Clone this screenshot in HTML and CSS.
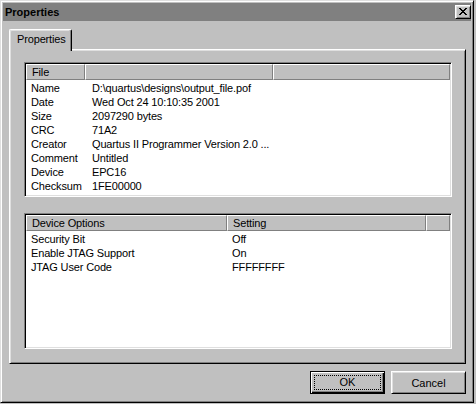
FILE: index.html
```html
<!DOCTYPE html>
<html>
<head>
<meta charset="utf-8">
<link rel="stylesheet" href="styles.css">
</head>
<body>
<div class="window">
  <div class="titlebar">
    <span class="title">Properties</span>
    <span class="close">
      <svg width="8" height="7" viewBox="0 0 8 7" shape-rendering="crispEdges">
        <path fill="#000" d="M0 0h2v1H0zM6 0h2v1H6zM1 1h2v1H1zM5 1h2v1H5zM2 2h4v1H2zM3 3h2v1H3zM2 4h4v1H2zM1 5h2v1H1zM5 5h2v1H5zM0 6h2v1H0zM6 6h2v1H6z"/>
      </svg>
    </span>
  </div>
  <div class="body">
    <div class="tabs"><div class="tab">Properties</div></div>
    <div class="panel">
      <div class="list list-file">
        <div class="hdr">
          <div class="hc">File</div><div class="hc"></div><div class="hc"></div>
        </div>
        <div class="rows">
          <div class="row"><span>Name</span><span>D:\quartus\designs\output_file.pof</span></div>
          <div class="row"><span>Date</span><span>Wed Oct 24 10:10:35 2001</span></div>
          <div class="row"><span>Size</span><span>2097290 bytes</span></div>
          <div class="row"><span>CRC</span><span>71A2</span></div>
          <div class="row"><span>Creator</span><span>Quartus II Programmer Version 2.0 ...</span></div>
          <div class="row"><span>Comment</span><span>Untitled</span></div>
          <div class="row"><span>Device</span><span>EPC16</span></div>
          <div class="row"><span>Checksum</span><span>1FE00000</span></div>
        </div>
      </div>
      <div class="list list-opts">
        <div class="hdr">
          <div class="hc">Device Options</div><div class="hc">Setting</div><div class="hc"></div>
        </div>
        <div class="rows">
          <div class="row"><span>Security Bit</span><span>Off</span></div>
          <div class="row"><span>Enable JTAG Support</span><span>On</span></div>
          <div class="row"><span>JTAG User Code</span><span>FFFFFFFF</span></div>
        </div>
      </div>
    </div>
    <div class="buttons">
      <button class="btn btn-default"><span class="focus">OK</span></button>
      <button class="btn">Cancel</button>
    </div>
  </div>
</div>
</body>
</html>
```
FILE: styles.css
```css
* { box-sizing: border-box; }

body {
  margin: 0;
  background: #c0c0c0;
  font-family: "Liberation Sans", Arial, sans-serif;
  font-size: 11px;
  color: #000;
}

.window {
  width: 474px;
  height: 403px;
  border: 1px solid;
  border-color: #dfdfdf #000 #000 #dfdfdf;
  box-shadow: inset 1px 1px #fff, inset -1px -1px #808080;
  padding: 2px;
  display: flex;
  flex-direction: column;
}

.titlebar {
  height: 18px;
  background: #808080;
  display: flex;
  align-items: center;
  justify-content: space-between;
  padding-left: 2px;
}

.title {
  font-weight: bold;
  line-height: 18px;
}

.close {
  width: 16px;
  height: 14px;
  background: #c0c0c0;
  border: 1px solid;
  border-color: #fff #000 #000 #fff;
  box-shadow: inset 1px 1px #dfdfdf, inset -1px -1px #808080;
  display: flex;
  align-items: center;
  justify-content: center;
  padding-bottom: 1px;
}

.close svg { display: block; }

.body {
  flex: 1;
  padding: 8px 6px 0 6px;
  display: flex;
  flex-direction: column;
}

.tabs { display: flex; }

.tab {
  position: relative;
  z-index: 1;
  width: 63px;
  height: 22px;
  margin-bottom: -2px;
  background: #c0c0c0;
  border-left: 1px solid #fff;
  border-top: 1px solid #fff;
  border-right: 1px solid #000;
  border-radius: 2px 2px 0 0;
  box-shadow: inset -1px 0 #808080, inset 1px 1px #dfdfdf;
  padding-left: 7px;
  line-height: 19px;
  letter-spacing: -0.15px;
}

.panel {
  width: 457px;
  height: 315px;
  border: 1px solid;
  border-color: #fff #000 #000 #fff;
  box-shadow: inset 1px 1px #dfdfdf, inset -1px -1px #808080;
  padding: 12px 0 0 14px;
}

.list {
  width: 428px;
  background: #fff;
  border: 1px solid;
  border-color: #808080 #fff #fff #808080;
  box-shadow: inset 1px 1px #000, inset -1px -1px #dfdfdf;
  padding: 1px;
  display: flex;
  flex-direction: column;
  letter-spacing: -0.15px;
}

.list-file { height: 135px; }
.list-opts { height: 136px; margin-top: 16px; }

.hdr {
  display: grid;
  height: 16px;
}

.list-file .hdr { grid-template-columns: 59px 188px 1fr; }
.list-opts .hdr { grid-template-columns: 201px 199px 1fr; }

.hc {
  background: #c0c0c0;
  border-top: 1px solid #fff;
  border-left: 1px solid #fff;
  border-right: 1px solid #808080;
  border-bottom: 1px solid #808080;
  padding: 1px 0 0 5px;
  line-height: 13px;
  white-space: nowrap;
  overflow: hidden;
}

.list-file .hc:nth-child(2) { padding-left: 6px; }
.list-opts .hc:nth-child(2) { padding-left: 5px; }

.rows { padding-top: 1px; }

.row {
  display: grid;
  height: 14px;
  line-height: 14px;
  white-space: nowrap;
}

.list-file .row { grid-template-columns: 59px 1fr; }
.list-opts .row { grid-template-columns: 201px 1fr; }

.row span:first-child { padding-left: 5px; }
.list-file .row span:last-child { padding-left: 7px; }
.list-opts .row span:last-child { padding-left: 5px; }

.buttons {
  display: flex;
  justify-content: flex-end;
  gap: 6px;
  margin-top: 7px;
  margin-right: -1px;
}

.btn {
  width: 75px;
  height: 23px;
  background: #c0c0c0;
  border: 1px solid;
  border-color: #fff #000 #000 #fff;
  box-shadow: inset 1px 1px #dfdfdf, inset -1px -1px #808080;
  font: inherit;
  color: #000;
  padding: 0;
  line-height: 20px;
}

.btn-default {
  border: 1px solid #000;
  box-shadow: inset 1px 1px #fff, inset -1px -1px #000, inset -2px -2px #808080;
  padding: 3px;
}

.focus {
  display: block;
  height: 100%;
  border: 1px dotted #000;
  line-height: 13px;
}
```
